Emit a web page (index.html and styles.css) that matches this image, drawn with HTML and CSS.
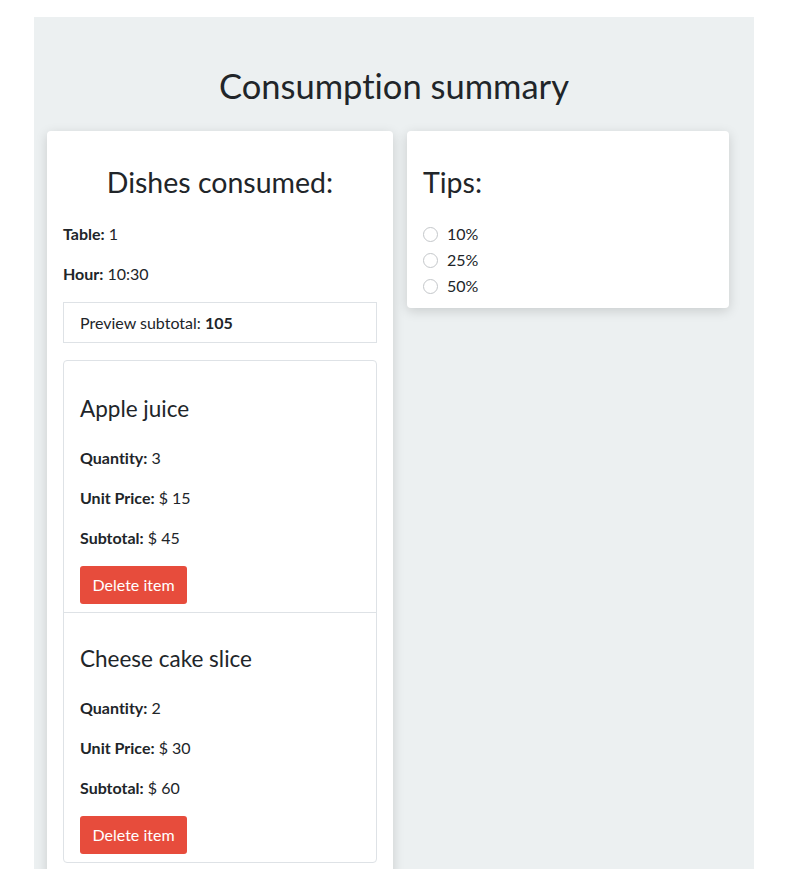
FILE: index.html
```html
<!DOCTYPE html>
<html lang="en">
<head>
<meta charset="utf-8">
<title>Consumption summary</title>
<link rel="stylesheet" href="styles.css">
</head>
<body>
<main class="container">
  <h1 class="page-title">Consumption summary</h1>
  <div class="row">
    <section class="card card-dishes">
      <h2 class="card-title center">Dishes consumed:</h2>
      <p class="line"><b>Table:</b> 1</p>
      <p class="line"><b>Hour:</b> 10:30</p>
      <div class="preview">Preview subtotal: <b>105</b></div>
      <ul class="items">
        <li class="item item-first">
          <h3 class="item-title">Apple juice</h3>
          <p class="line"><b>Quantity:</b> 3</p>
          <p class="line"><b>Unit Price:</b> $ 15</p>
          <p class="line"><b>Subtotal:</b> $ 45</p>
          <button class="btn-danger" type="button">Delete item</button>
        </li>
        <li class="item">
          <h3 class="item-title">Cheese cake slice</h3>
          <p class="line"><b>Quantity:</b> 2</p>
          <p class="line"><b>Unit Price:</b> $ 30</p>
          <p class="line"><b>Subtotal:</b> $ 60</p>
          <button class="btn-danger" type="button">Delete item</button>
        </li>
      </ul>
    </section>
    <section class="card card-tips">
      <h2 class="card-title">Tips:</h2>
      <label class="radio"><input type="radio" name="tip"><span class="dot"></span>10%</label>
      <label class="radio"><input type="radio" name="tip"><span class="dot"></span>25%</label>
      <label class="radio"><input type="radio" name="tip"><span class="dot"></span>50%</label>
    </section>
  </div>
</main>
</body>
</html>
```
FILE: styles.css
```css
* { box-sizing: border-box; }
html, body { margin: 0; padding: 0; background: #fff; }
body {
  font-family: Lato, "Open Sans", sans-serif;
  font-size: 16px;
  line-height: 24px;
  color: #212529;
  font-variant-ligatures: no-common-ligatures;
}
.container {
  width: 720px;
  margin: 17px 0 0 34px;
  background: #ecf0f1;
  padding: 47px 0 40px 13px;
  min-height: 852px;
}
.page-title {
  margin: 0 0 23px;
  font-size: 34.5px;
  line-height: 44px;
  font-weight: 400;
  text-align: center;
  padding-right: 13px;
}
.row {
  display: flex;
  align-items: flex-start;
  gap: 14px;
}
.card {
  background: #fff;
  border-radius: 4px;
  box-shadow: 0 3px 12px rgba(0, 0, 0, 0.15);
}
.card-dishes {
  width: 346px;
  padding: 34px 16px 20px;
}
.card-tips {
  width: 322px;
  padding: 34px 16px 9px;
}
.card-title {
  margin: 0 0 23px;
  font-size: 28.5px;
  line-height: 34px;
  font-weight: 400;
}
.card-tips .card-title { margin-bottom: 22px; }
.center { text-align: center; }
.line { margin: 0 0 16px; }
.line b { font-weight: 700; }
.preview {
  border: 1px solid #dee2e6;
  padding: 8px 16px;
  line-height: 23px;
  margin-bottom: 17px;
}
.items {
  list-style: none;
  margin: 0;
  padding: 0;
  border: 1px solid #dee2e6;
  border-radius: 4px;
}
.item {
  padding: 32px 16px 8px;
}
.item-first { padding-top: 34px; }
.item + .item { border-top: 1px solid #dee2e6; }
.item-title {
  margin: 0 0 24px;
  font-size: 22.5px;
  line-height: 27px;
  font-weight: 400;
}
.btn-danger {
  display: block;
  font-family: inherit;
  font-size: 16px;
  line-height: 24px;
  height: 38px;
  padding: 7px 12.5px;
  border: 0;
  border-radius: 3px;
  background: #e74c3c;
  color: #fff;
}
.radio {
  display: flex;
  align-items: center;
  height: 26px;
}
.radio input {
  position: absolute;
  opacity: 0;
  width: 0;
  height: 0;
}
.dot {
  width: 15px;
  height: 15px;
  border: 1px solid #c4c7ca;
  border-radius: 50%;
  background: #fff;
  margin-right: 9px;
}
```
